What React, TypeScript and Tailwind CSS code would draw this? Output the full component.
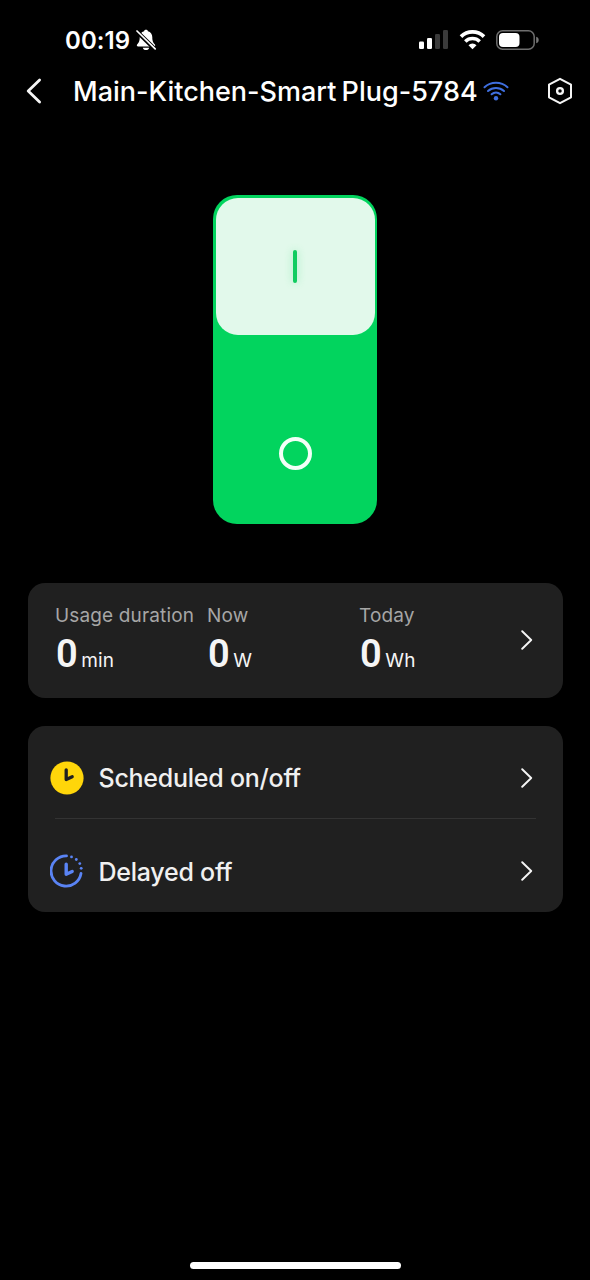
import { ReactNode } from "react";

interface Stat {
  label: string;
  value: string;
  unit: string;
}

const stats: Stat[] = [
  { label: "Usage duration", value: "0", unit: "min" },
  { label: "Now", value: "0", unit: "W" },
  { label: "Today", value: "0", unit: "Wh" },
];

function ChevronRight() {
  return (
    <svg width="12" height="20" viewBox="0 0 12 20" fill="none" className="shrink-0">
      <path d="M1.2 1.2 10.2 10 1.2 18.8" stroke="#f5f5f5" strokeWidth="1.9" strokeLinecap="round" strokeLinejoin="round" />
    </svg>
  );
}

function StatusBar() {
  return (
    <div className="flex h-[66px] items-center pt-[14px] pl-[65px] pr-[51px]">
      <span className="w-[66px] whitespace-nowrap pt-[2px] text-[24px] leading-none font-semibold tracking-[0.1px]">00:19</span>
      <svg width="20" height="22" viewBox="0 0 20 22" className="ml-[5px]">
        <path
          d="M10 .8c-.9 0-1.7.5-1.9 1.4C5.2 3 3.7 5.2 3.7 8.2c0 4.1-1 5.4-2.4 7-.9 1-.5 2.3.9 2.3h15.6c1.4 0 1.8-1.3.9-2.3-1.4-1.6-2.4-2.9-2.4-7 0-3-1.5-5.2-4.4-6C11.7 1.3 10.9.8 10 .8Z"
          fill="#fff"
        />
        <path d="M6.8 18.7h6.4c-.3 1.5-1.6 2.4-3.2 2.4s-2.9-.9-3.2-2.4Z" fill="#fff" />
        <path d="M.8 2.4 19.4 20.6" stroke="#000" strokeWidth="4.2" />
        <path d="M1 2 19.2 19.9" stroke="#fff" strokeWidth="1.7" strokeLinecap="round" />
      </svg>
      <div className="ml-auto flex items-center">
        <svg width="30" height="20" viewBox="0 0 30 20">
          <rect x="0" y="11.5" width="5" height="7.5" rx="1.3" fill="#fff" />
          <rect x="8" y="8" width="5" height="11" rx="1.3" fill="#fff" />
          <rect x="16" y="4" width="5" height="15" rx="1.3" fill="#3a3a3a" />
          <rect x="24" y="0" width="5" height="19" rx="1.3" fill="#3a3a3a" />
        </svg>
        <svg width="27" height="20" viewBox="0 0 27 20" fill="none" className="ml-[10px]">
          <path d="M2 6.6a16.3 16.3 0 0 1 23 0" stroke="#fff" strokeWidth="3.7" />
          <path d="M6.3 11.5a10.2 10.2 0 0 1 14.4 0" stroke="#fff" strokeWidth="3.5" />
          <path d="M13.5 19.3 9.5 15.2a5.7 5.7 0 0 1 8 0Z" fill="#fff" />
        </svg>
        <svg width="43" height="20" viewBox="0 0 43 20" fill="none" className="ml-[10px]">
          <rect x=".8" y=".8" width="37.4" height="18.4" rx="5.8" stroke="#6e6e6e" strokeWidth="1.5" />
          <rect x="3" y="3" width="20.5" height="14" rx="4" fill="#fff" />
          <path d="M40.2 6.8c1.8.6 2.5 1.8 2.5 3.2s-.7 2.6-2.5 3.2Z" fill="#777" />
        </svg>
      </div>
    </div>
  );
}

function Header() {
  return (
    <header className="flex h-[50px] items-center pl-[26px] pr-[17px]">
      <svg width="16" height="26" viewBox="0 0 16 26" fill="none">
        <path d="M13.6 2 2.2 13l11.4 11" stroke="#f5f5f5" strokeWidth="2.8" strokeLinecap="round" strokeLinejoin="round" />
      </svg>
      <h1 className="ml-[31px] w-[405px] whitespace-nowrap text-[27px] leading-none font-medium [word-spacing:-2px]">
        Main-Kitchen-Smart Plug-5784
      </h1>
      <svg width="26" height="20" viewBox="0 0 26 20" fill="none" className="ml-[5px]" stroke="#3f6fe0" strokeWidth="2" strokeLinecap="round">
        <path d="M1.5 6.3a17 17 0 0 1 23 0" />
        <path d="M5 10a12 12 0 0 1 16 0" />
        <path d="M8.6 13.3a6.6 6.6 0 0 1 8.800 0" />
        <circle cx="13" cy="17.3" r="2.2" fill="#3f6fe0" stroke="none" />
      </svg>
      <svg width="26" height="28" viewBox="0 0 26 28" fill="none" className="ml-auto" stroke="#f5f5f5" strokeWidth="2">
        <path d="M13 1.8 24 7.7v12.6L13 26.2 2 20.3V7.700Z" strokeLinejoin="round" />
        <circle cx="13" cy="14" r="2.9" strokeWidth="2.3" />
      </svg>
    </header>
  );
}

function PlugSwitch() {
  return (
    <div className="mx-auto mt-[79px] flex h-[329px] w-[164px] flex-col rounded-[24px] bg-[#02d45e] px-[2.5px] pt-[2.5px]">
      <div className="flex h-[137px] shrink-0 items-center justify-center rounded-[22px] bg-[#e2f9eb]">
        <div className="h-[33px] w-[4px] rounded-full bg-[#10cc60] shadow-[0_0_8px_rgba(4,212,95,0.3)]" />
      </div>
      <div className="flex flex-1 items-center justify-center pt-[48px]">
        <div className="h-[33px] w-[33px] rounded-full border-4 border-[#f2fff7]" />
      </div>
    </div>
  );
}

function StatsCard() {
  return (
    <div className="mx-[27.5px] mt-[58.5px] flex h-[115px] items-center rounded-[17px] bg-[#202020] pl-[27.5px] pr-[30px]">
      {stats.map((stat) => (
        <div key={stat.label} className="w-[152px] shrink-0 pt-[6px]">
          <p className="whitespace-nowrap text-[19px] leading-[24px] tracking-[0.15px] text-[#a6a6a6]">{stat.label}</p>
          <p className="mt-[5px] flex items-baseline whitespace-nowrap leading-[42px]">
            <span className="ml-px font-[Roboto,sans-serif] text-[38px] font-semibold text-[#f5f5f5]">{stat.value}</span>
            <span className="ml-[3.5px] text-[19px] tracking-[0.2px] text-[#f5f5f5]">{stat.unit}</span>
          </p>
        </div>
      ))}
      <div className="ml-auto">
        <ChevronRight />
      </div>
    </div>
  );
}

function MenuRow({ icon, label }: { icon: ReactNode; label: string }) {
  return (
    <div className="flex h-[92px] items-center pt-[12px] pl-[22.5px] pr-[30px]">
      {icon}
      <span className="ml-[14.5px] whitespace-nowrap pt-[2px] text-[25px] leading-none font-medium tracking-[-0.25px] text-[#f0f0f0]">{label}</span>
      <div className="ml-auto">
        <ChevronRight />
      </div>
    </div>
  );
}

function ScheduleIcon() {
  return (
    <svg width="34" height="34" viewBox="0 0 34 34" fill="none">
      <circle cx="17" cy="17" r="16.6" fill="#ffd60a" />
      <path d="M16.2 8.8v9.7l6-2.7" stroke="#202020" strokeWidth="3.3" strokeLinecap="round" strokeLinejoin="round" />
    </svg>
  );
}

function DelayIcon() {
  return (
    <svg width="34" height="34" viewBox="0 0 34 34" fill="none">
      <path d="M16.5 1.9A15.100 15.100 0 1 0 31 19.5" stroke="#5a84f5" strokeWidth="2.8" strokeLinecap="round" />
      <path d="M16.2 10.3v9.9l6-2.7" stroke="#5a84f5" strokeWidth="3.4" strokeLinecap="round" strokeLinejoin="round" />
      <g fill="#5a84f5">
        <circle cx="21.5" cy="2.9" r="1.4" />
        <circle cx="26.3" cy="5.5" r="1.4" />
        <circle cx="29.8" cy="9.6" r="1.4" />
        <circle cx="31.2" cy="14.3" r="1.4" />
      </g>
    </svg>
  );
}

export default function App() {
  return (
    <div className="flex h-[1280px] w-[590px] flex-col overflow-hidden bg-black font-[Inter,sans-serif] text-white">
      <StatusBar />
      <Header />
      <PlugSwitch />
      <StatsCard />
      <div className="mx-[27.5px] mt-[28px] h-[186px] rounded-[17px] bg-[#202020]">
        <MenuRow icon={<ScheduleIcon />} label="Scheduled on/off" />
        <div className="mx-[27px] h-[1.5px] bg-[#333]" />
        <MenuRow icon={<DelayIcon />} label="Delayed off" />
      </div>
      {/* Home indicator */}
      <div className="mx-auto mt-auto mb-[11px] h-[7px] w-[211px] rounded-full bg-white" />
    </div>
  );
}
